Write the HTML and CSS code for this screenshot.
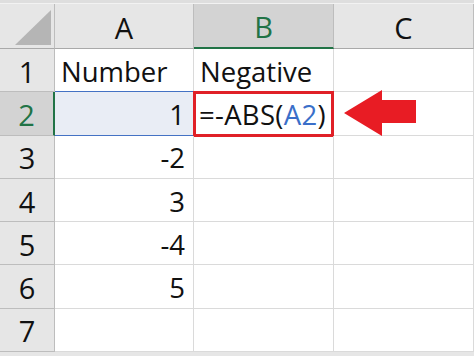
FILE: index.html
```html
<!DOCTYPE html>
<html lang="en">
<head>
  <meta charset="UTF-8">
  <title>ABS negative</title>
  <link rel="stylesheet" href="styles.css">
</head>
<body>
  <div class="top-band"></div>
  <div class="sheet">
    <div class="corner">
      <svg width="36" height="35" viewBox="0 0 36 35"><polygon points="0,35 36,35 36,0" fill="#b5b5b5"/></svg>
    </div>
    <div class="col-head">A</div>
    <div class="col-head active">B</div>
    <div class="col-head">C</div>

    <div class="row-head">1</div>
    <div class="cell">Number</div>
    <div class="cell">Negative</div>
    <div class="cell"></div>

    <div class="row-head active">2</div>
    <div class="cell num ref">1</div>
    <div class="cell editing">=-ABS(<span class="ref-text">A2</span>)<span class="caret"></span></div>
    <div class="cell arrow-cell">
      <svg class="arrow" width="74" height="46" viewBox="0 0 74 46"><polygon points="0,23 38,0 38,10 72,10 72,33 38,33 38,46" fill="#e81c24"/></svg>
    </div>

    <div class="row-head">3</div>
    <div class="cell num">-2</div>
    <div class="cell"></div>
    <div class="cell"></div>

    <div class="row-head">4</div>
    <div class="cell num">3</div>
    <div class="cell"></div>
    <div class="cell"></div>

    <div class="row-head">5</div>
    <div class="cell num">-4</div>
    <div class="cell"></div>
    <div class="cell"></div>

    <div class="row-head">6</div>
    <div class="cell num">5</div>
    <div class="cell"></div>
    <div class="cell"></div>

    <div class="row-head">7</div>
    <div class="cell"></div>
    <div class="cell"></div>
    <div class="cell"></div>
  </div>
  <div class="bottom-band"></div>
</body>
</html>
```

FILE: styles.css
```css
:root {
  --grid: #dadada;
  --head-bg: #e6e6e6;
  --head-line: #bdbdbd;
  --green: #217346;
}
* { box-sizing: border-box; }
body {
  margin: 0;
  background: #fff;
  font-family: "Open Sans", "Noto Sans", sans-serif;
  color: #111;
  overflow: hidden;
}
.top-band {
  height: 4px;
  background: #dedede;
  border-bottom: 1px solid #f2f2f2;
}
.bottom-band {
  height: 4px;
  background: #e6e6e6;
}
.sheet {
  display: grid;
  grid-template-columns: 55px 139px 140px 140px;
  grid-template-rows: 45px repeat(7, 43.3px);
  font-size: 27.5px;
}
.corner {
  background: var(--head-bg);
  border-right: 1px solid var(--head-line);
  border-bottom: 1px solid #a9a9a9;
  display: flex;
  align-items: flex-end;
  justify-content: flex-end;
  padding: 0 3px 3px 0;
}
.col-head {
  background: var(--head-bg);
  border-right: 1px solid var(--head-line);
  border-bottom: 1px solid #a9a9a9;
  display: flex;
  align-items: center;
  justify-content: center;
  font-size: 29px;
  padding-top: 2px;
}
.col-head.active {
  background: #d3d3d3;
  color: var(--green);
  border-bottom: 2px solid var(--green);
}
.row-head {
  background: var(--head-bg);
  border-right: 1px solid var(--head-line);
  border-bottom: 1px solid var(--head-line);
  display: flex;
  align-items: center;
  justify-content: center;
  font-size: 29px;
  padding-top: 2px;
}
.row-head.active {
  background: #d3d3d3;
  color: var(--green);
  border-right: 2px solid var(--green);
}
.cell {
  border-right: 1px solid var(--grid);
  border-bottom: 1px solid var(--grid);
  display: flex;
  align-items: center;
  padding: 2px 6px 0;
  white-space: nowrap;
}
.num { justify-content: flex-end; padding-right: 8px; }
.ref {
  background: #e9edf5;
  border-top: 1px solid #4472c4;
  border-bottom: 1px solid #4472c4;
  margin-top: -1px;
}
.editing {
  border: 3px solid #e02027;
  margin: -1px 0 -1px -1px;
  padding-left: 3px;
  letter-spacing: 0.3px;
}
.ref-text { color: #3a6fc9; }
.caret {
  width: 1px;
  height: 28px;
  background: #111;
  margin-left: 1px;
}
.arrow-cell { padding: 0; }
.arrow { margin-left: 10px; }
```
